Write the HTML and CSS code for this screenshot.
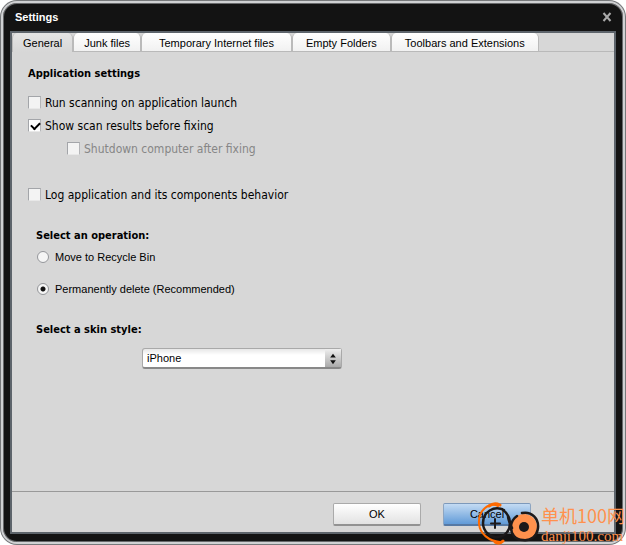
FILE: index.html
```html
<!doctype html>
<html lang="en">
<head>
    <meta charset="utf-8">
    <meta name="viewport" content="width=device-width, initial-scale=1">
    <title>Settings</title>
    <link rel="stylesheet" href="styles.css">
</head>
<body>
    <form class="window">
        <div class="frame">
            <header class="titlebar">
                <h1>Settings</h1>
                <button type="button" class="close" aria-label="Close">
                    <svg width="10" height="10" viewBox="0 0 10 10"><path d="M1.5 1 8.5 9M8.5 1 1.5 9" stroke="#aaa" stroke-width="2"/></svg>
                </button>
            </header>
            <div class="client">
                <div class="tabs" role="tablist">
                    <button type="button" role="tab" aria-selected="true" class="tab active">General</button>
                    <button type="button" role="tab" class="tab">Junk files</button>
                    <button type="button" role="tab" class="tab wide">Temporary Internet files</button>
                    <button type="button" role="tab" class="tab medium">Empty Folders</button>
                    <button type="button" role="tab" class="tab medium">Toolbars and Extensions</button>
                </div>
                <div class="panel" role="tabpanel">
                    <h2>Application settings</h2>
                    <div class="checks">
                        <label class="check"><input type="checkbox">Run scanning on application launch</label>
                        <label class="check"><input type="checkbox" checked>Show scan results before fixing</label>
                        <label class="check sub"><input type="checkbox" disabled>Shutdown computer after fixing</label>
                        <label class="check log"><input type="checkbox">Log application and its components behavior</label>
                    </div>
                    <div class="options">
                        <h2 id="operation">Select an operation:</h2>
                        <div class="radios" role="radiogroup" aria-labelledby="operation">
                            <label class="radio"><input type="radio" name="operation">Move to Recycle Bin</label>
                            <label class="radio"><input type="radio" name="operation" checked>Permanently delete (Recommended)</label>
                        </div>
                        <h2><label for="skin">Select a skin style:</label></h2>
                        <div class="combo">
                            <select id="skin"><option>iPhone</option></select>
                            <svg class="arrows" width="16" height="19" viewBox="0 0 16 19"><path d="M8 5l3 4H5zM8 16l3-4H5z" fill="#111"/></svg>
                        </div>
                    </div>
                </div>
                <footer class="actions">
                    <button type="submit" class="btn">OK</button>
                    <button type="button" class="btn primary">Cancel</button>
                </footer>
            </div>
        </div>
        <div class="watermark">
            <svg width="64" height="44" viewBox="0 0 64 44" fill="none" stroke-linecap="round">
                <path d="M21 5C12 1 1 9 2 23c1 10 10 17 21 18" stroke="#ff6a00" stroke-width="2"/>
                <path d="M12 5c4-3 7-3 11-1M18 41c3 2 6 1 8-1" stroke="#ff6a00" stroke-width="3"/>
                <path d="M27 9C17 4 6 11 6 22c0 9 8 15 15 14 8-1 12-7 12-14 0-6-4-11-8-14" stroke="#1c191a" stroke-width="2.5"/>
                <path d="M18 18v9M14 22.5h9" stroke="#1c191a" stroke-width="2"/>
                <circle cx="47" cy="26" r="13" fill="#ff914d"/>
                <path d="M45 12c10-2 17 6 16 15-1 8-7 13-15 12-8 0-12-6-12-13 0-5 3-9 6-11M31 15c0 4 2 7 4 12" stroke="#1c191a" stroke-width="2.5"/>
                <circle cx="47" cy="26" r="5" fill="#1c191a"/>
            </svg>
            <div class="watermark-text">
                <span class="site">单机100网</span>
                <span class="domain">danji100.com</span>
            </div>
        </div>
    </form>
</body>
</html>
```

FILE: styles.css
```css
* {
    box-sizing: border-box;
}

body {
    margin: 0;
    background: #fff;
    color: #000;
    font: 11px/14px "Liberation Sans", Arial, sans-serif;
}

h1, h2 {
    margin: 0;
    font-size: 11px;
    line-height: 14px;
}

button, select {
    font: inherit;
    color: inherit;
}

.window {
    position: relative;
    height: 100vh;
    padding: 1px;
    border-radius: 17px;
    background: #77797b;
}

.frame {
    display: flex;
    flex-direction: column;
    height: 100%;
    padding: 0 7px 8px;
    border: 2px solid #d0d1d3;
    border-radius: 16px;
    background: #131313;
    box-shadow: inset 0 0 0 1px #68696b;
}

.titlebar {
    display: flex;
    flex: none;
    align-items: center;
    justify-content: space-between;
    height: 28px;
    padding: 0 4px 0 5px;
    color: #fff;
}

.close {
    display: flex;
    padding: 0;
    border: 0;
    background: none;
}

.client {
    display: flex;
    flex: 1;
    flex-direction: column;
    border: 2px solid #5d646b;
    background: #d7d7d7;
}

.tabs {
    display: flex;
    border-bottom: 1px solid #b9b9b9;
}

.tab {
    height: 18px;
    padding: 2px 10px 0;
    border: solid #bababa;
    border-width: 0 1px;
    border-radius: 5px 5px 0 0;
    background: linear-gradient(#fff, #f1f1f1);
    white-space: nowrap;
}

.tab.medium {
    padding: 2px 13px 0;
}

.tab.wide {
    padding: 2px 17px 0;
}

.tab.active {
    height: 19px;
    margin-bottom: -1px;
    padding: 0 10px;
    background: linear-gradient(#e4e4e4, #d7d7d7);
}

.panel {
    flex: 1;
    padding: 15px 16px;
    border-bottom: 1px solid #999;
}

h2 {
    font-family: "DejaVu Sans Condensed", "DejaVu Sans", Tahoma, sans-serif;
}

.checks {
    display: flex;
    flex-direction: column;
    align-items: flex-start;
    gap: 7px;
    margin: 14px 0 26px;
}

.check {
    display: flex;
    align-items: center;
    gap: 4px;
    font: 12px/16px "DejaVu Sans Condensed", "DejaVu Sans", Tahoma, sans-serif;
}

.check.sub {
    margin-left: 39px;
    color: #868686;
}

.check.log {
    margin-top: 23px;
}

.check input {
    appearance: none;
    width: 13px;
    height: 13px;
    margin: 0 0 2px;
    border: 1px solid;
    border-color: #a3a5a9 #b4b5b8 #e8e8e8 #a3a5a9;
    background: #f3f3f3;
}

.check input:checked {
    background: #fff;
}

.check input:checked::before {
    content: "";
    display: block;
    width: 7px;
    height: 4px;
    margin: 2px;
    border: solid #000;
    border-width: 0 0 2px 2px;
    transform: rotate(-45deg);
}

.options {
    padding-left: 8px;
}

.radios {
    display: flex;
    flex-direction: column;
    align-items: flex-start;
    gap: 18px;
    margin: 7px 0 27px;
}

.radio {
    display: flex;
    align-items: center;
    gap: 6px;
}

.radio input {
    appearance: none;
    width: 12px;
    height: 12px;
    margin: 0 0 0 1px;
    border: 1px solid #94969a;
    border-radius: 50%;
    background: #f5f5f5;
}

.radio input:checked {
    background: radial-gradient(circle, #111 2px, #f5f5f5 3px);
}

.combo {
    display: grid;
    width: 200px;
    margin: 11px 0 0 106px;
    border: 1px solid #a9a9a9;
    border-bottom: 2px solid #888;
    border-radius: 3px;
    background: linear-gradient(#e7e7e7, #fff 6px);
}

.combo select {
    grid-area: 1 / 1;
    appearance: none;
    height: 18px;
    padding: 0 20px 0 4px;
    border: 0;
    background: none;
}

.arrows {
    grid-area: 1 / 1;
    justify-self: end;
    height: 18px;
    background: linear-gradient(#eee, #aaa);
    pointer-events: none;
}

.actions {
    display: flex;
    flex: none;
    justify-content: flex-end;
    gap: 22px;
    padding: 11px 83px 6px 0;
}

.btn {
    width: 88px;
    height: 23px;
    border: 1px solid #aaa;
    border-bottom: 2px solid #929292;
    border-radius: 2px;
    background: linear-gradient(#fff, #e2e2e2);
}

.btn.primary {
    border-color: #7d99bb #8da5c1 #5679a4;
    background: linear-gradient(#c4dbf3, #619bd8);
}

/* site mark laid over the window corner */
.watermark {
    position: absolute;
    right: 1px;
    bottom: 0;
    display: flex;
    align-items: center;
    color: #ff914d;
    pointer-events: none;
}

.watermark-text {
    display: flex;
    flex-direction: column;
}

.site {
    font: 18px/26px "Noto Sans CJK SC", sans-serif;
}

.domain {
    font: 15px/17px "Liberation Serif", "Times New Roman", serif;
}
```
